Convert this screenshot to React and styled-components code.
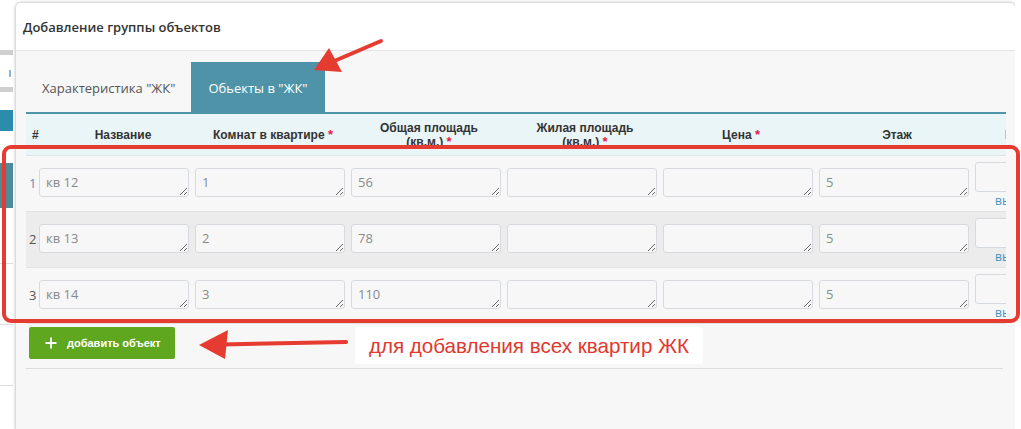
import React from "react";
import styled, { createGlobalStyle } from "styled-components";

const GlobalStyle = createGlobalStyle`
  html, body { margin: 0; padding: 0; background: #ffffff; }
  body { font-family: "Open Sans", "Liberation Sans", sans-serif; }
  * { box-sizing: border-box; }
`;

const Page = styled.div`
  position: relative;
  width: 1021px;
  height: 429px;
  overflow: hidden;
  display: flex;
  background: #ffffff;
`;

const SideStrip = styled.div`
  width: ${(p) => p.$w}px;
  flex: none;
  display: flex;
  flex-direction: column;
  background: #ffffff;
`;

const Deco = styled.div`
  flex: none;
  height: ${(p) => p.$h}px;
  margin-top: ${(p) => p.$top}px;
  margin-left: ${(p) => p.$left || 0}px;
  width: ${(p) => (p.$width ? `${p.$width}px` : "auto")};
  background: ${(p) => p.$bg};
`;

const Modal = styled.div`
  flex: none;
  width: 999px;
  margin: 3px 0 0 3px;
  border-radius: 5px 5px 0 0;
  background: #f7f7f7;
  box-shadow: 0 0 3px 1px rgba(0, 0, 0, 0.22);
  display: flex;
  flex-direction: column;
`;

const ModalHeader = styled.div`
  height: 48px;
  padding: 0 7px;
  display: flex;
  align-items: center;
  background: #ffffff;
  border-bottom: 1px solid #e5e5e5;
  border-radius: 5px 5px 0 0;
`;

const Title = styled.h4`
  margin: 0;
  font-size: 13px;
  font-weight: 600;
  color: #333;
  font-family: "Open Sans", sans-serif;
`;

const Body = styled.div`
  padding: 11px 9px 0 10px;
`;

const Tabs = styled.div`
  display: flex;
  height: 50px;
`;

const Tab = styled.div`
  display: flex;
  align-items: center;
  padding: 2px ${(p) => (p.$active ? 17 : 16)}px 0;
  font-size: 13px;
  font-family: "Open Sans", sans-serif;
  color: ${(p) => (p.$active ? "#ffffff" : "#555")};
  background: ${(p) => (p.$active ? "#4f93a8" : "transparent")};
`;

const TableClip = styled.div`
  width: 980px;
  overflow: hidden;
  border-top: 2px solid #4f93a8;
`;

const COLS = "13px repeat(7, 156px) 156px";

const HeadRow = styled.div`
  display: grid;
  grid-template-columns: ${COLS};
  width: 1261px;
  height: 42px;
  background: #e9f5f7;
  border-bottom: 1px solid #dfe6e8;
`;

const HeadCell = styled.div`
  display: flex;
  align-items: center;
  justify-content: ${(p) => p.$justify || "center"};
  padding: ${(p) => p.$pad || "0"};
  text-align: center;
  font-family: "Liberation Sans", Arial, sans-serif;
  font-weight: 700;
  font-size: 12px;
  line-height: 14px;
  color: #333;
`;

const Req = styled.span`
  color: #e8174f;
  font-size: 13px;
`;

const Row = styled.div`
  display: grid;
  grid-template-columns: ${COLS};
  width: 1261px;
  height: 56px;
  background: ${(p) => (p.$alt ? "#ececec" : "#f7f7f7")};
  border-bottom: 1px solid #e2e2e2;
`;

const NumCell = styled.div`
  display: flex;
  align-items: center;
  padding-left: 3px;
  padding-bottom: 2px;
  font-size: 13px;
  font-family: "Open Sans", sans-serif;
  color: ${(p) => p.$tint};
`;

const Cell = styled.div`
  padding-top: ${(p) => p.$top}px;
  display: flex;
  flex-direction: column;
  align-items: flex-start;
`;

const Field = styled.textarea`
  width: 150px;
  height: ${(p) => p.$h || 29}px;
  padding: 5px 6px;
  border: 1px solid #d6dade;
  border-radius: 3px;
  background: #f7f7f7;
  color: #8a8a8a;
  font-family: "Open Sans", sans-serif;
  font-size: 13px;
  line-height: 17px;
  overflow: hidden;
  outline: none;
`;

const PickLink = styled.a`
  margin: 2px 0 0 20px;
  font-size: 12px;
  font-family: "Open Sans", sans-serif;
  color: #3b93c2;
  text-decoration: none;
  line-height: 14px;
`;

const Footer = styled.div`
  padding: 3px 0 0 3px;
`;

const AddButton = styled.button`
  display: flex;
  align-items: center;
  gap: 10px;
  height: 32px;
  width: 146px;
  padding: 0 0 0 16px;
  border: none;
  border-radius: 2px;
  background: #5fa71f;
  color: #ffffff;
  font-family: "Liberation Sans", Arial, sans-serif;
  font-size: 11px;
  font-weight: 700;
`;

const Divider = styled.div`
  margin-top: 9px;
  width: 977px;
  height: 1px;
  background: #dcdcdc;
`;

const Frame = styled.div`
  position: absolute;
  left: 2px;
  top: 145px;
  width: 1018px;
  height: 178px;
  border: 4px solid #e53b30;
  border-radius: 9px;
  pointer-events: none;
`;

const Note = styled.div`
  position: absolute;
  left: 355px;
  top: 327px;
  width: 348px;
  height: 37px;
  display: flex;
  align-items: center;
  justify-content: center;
  background: #ffffff;
  border-radius: 3px;
  font-family: "Liberation Sans", Arial, sans-serif;
  font-size: 20.6px;
  color: #e0392d;
`;

const Arrows = styled.svg`
  position: absolute;
  left: 0;
  top: 0;
  pointer-events: none;
`;

const rows = [
  { n: 1, name: "кв 12", rooms: "1", total: "56", live: "", price: "", floor: "5" },
  { n: 2, name: "кв 13", rooms: "2", total: "78", live: "", price: "", floor: "5" },
  { n: 3, name: "кв 14", rooms: "3", total: "110", live: "", price: "", floor: "5" },
];

const R = () => <Req>*</Req>;

export default function App() {
  return (
    <>
      <GlobalStyle />
      <Page>
        <SideStrip $w={13}>
          <Deco $top={50} $h={5} $bg="#cfcfcf" />
          <Deco $top={15} $h={7} $width={2} $left={9} $bg="#8fb4dd" />
          <Deco $top={10} $h={5} $bg="#cfcfcf" />
          <Deco $top={18} $h={21} $bg="#2b8cab" />
          <Deco $top={32} $h={45} $bg="#4f8a9a" />
          <Deco $top={55} $h={1} $bg="#dddddd" />
          <Deco $top={60} $h={1} $bg="#dddddd" />
          <Deco $top={60} $h={1} $bg="#dddddd" />
        </SideStrip>
        <Modal>
          <ModalHeader>
            <Title>Добавление группы объектов</Title>
          </ModalHeader>
          <Body>
            <Tabs>
              <Tab>Характеристика "ЖК"</Tab>
              <Tab $active>Обьекты в "ЖК"</Tab>
            </Tabs>
            <TableClip>
              <HeadRow>
                <HeadCell $justify="flex-start" $pad="0 0 0 6px">#</HeadCell>
                <HeadCell $pad="0 0 0 12px">Название</HeadCell>
                <HeadCell>
                  <span>Комнат в квартире <R /></span>
                </HeadCell>
                <HeadCell>
                  <span>
                    Общая площадь
                    <br />
                    (кв.м.) <R />
                  </span>
                </HeadCell>
                <HeadCell>
                  <span>
                    Жилая площадь
                    <br />
                    (кв.м.) <R />
                  </span>
                </HeadCell>
                <HeadCell>
                  <span>Цена <R /></span>
                </HeadCell>
                <HeadCell>Этаж</HeadCell>
                <HeadCell $justify="flex-start" $pad="0 0 0 30px">Планировка</HeadCell>
                <HeadCell />
              </HeadRow>
              {rows.map((r, i) => (
                <Row key={r.n} $alt={i === 1}>
                  <NumCell $tint={i === 0 ? "#5f8db5" : "#555"}>{r.n}</NumCell>
                  {[r.name, r.rooms, r.total, r.live, r.price, r.floor].map((v, k) => (
                    <Cell key={k} $top={12}>
                      <Field readOnly defaultValue={v} />
                    </Cell>
                  ))}
                  <Cell $top={6}>
                    <Field readOnly defaultValue="" $h={30} />
                    <PickLink href="#">выбрать</PickLink>
                  </Cell>
                  <Cell $top={12} />
                </Row>
              ))}
            </TableClip>
            <Footer>
              <AddButton type="button">
                <svg width="12" height="12" viewBox="0 0 12 12">
                  <path d="M6 0.5v11M0.5 6h11" stroke="#fff" strokeWidth="1.8" />
                </svg>
                добавить объект
              </AddButton>
            </Footer>
            <Divider />
          </Body>
        </Modal>
        <SideStrip $w={6} />
        <Frame />
        <Note>для добавления всех квартир ЖК</Note>
        <Arrows width="1021" height="429" viewBox="0 0 1021 429">
          <line x1="381" y1="41" x2="332" y2="62" stroke="#e53b30" strokeWidth="4" strokeLinecap="round" />
          <polygon points="314,70 329,48 342,72" fill="#e53b30" />
          <line x1="346" y1="342" x2="222" y2="344.5" stroke="#e53b30" strokeWidth="4" strokeLinecap="round" />
          <polygon points="199,345 228,330 225,359" fill="#e53b30" />
        </Arrows>
      </Page>
    </>
  );
}
